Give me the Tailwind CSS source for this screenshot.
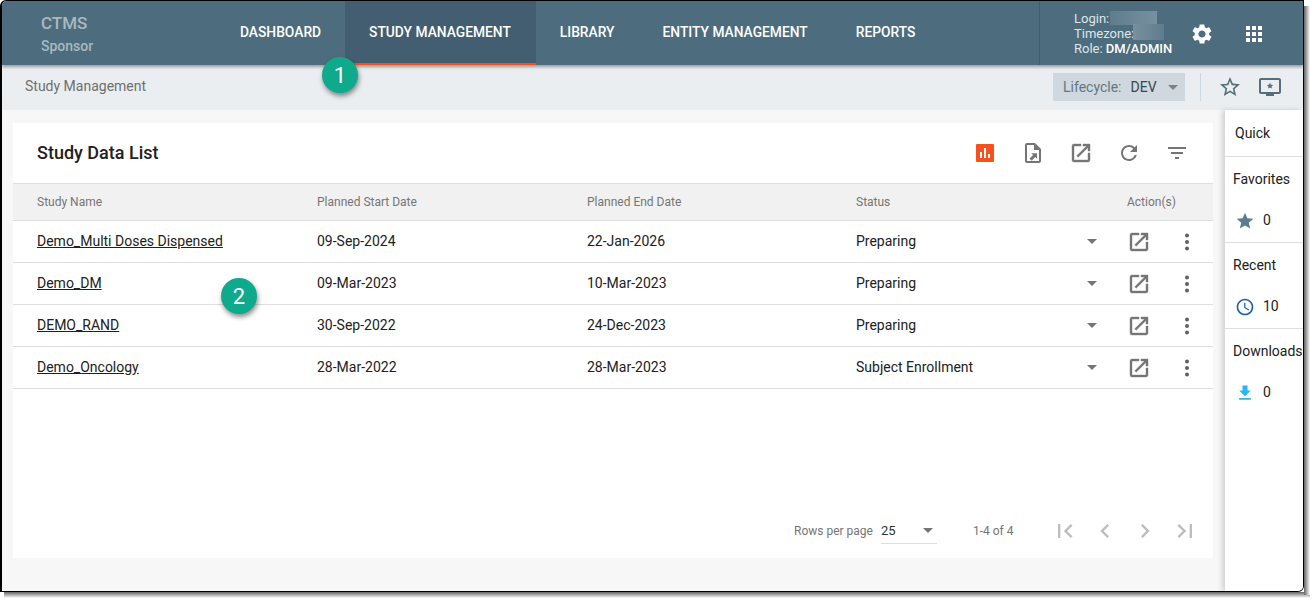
<!DOCTYPE html>
<html lang="en">
<head>
  <title>CTMS Study Management</title>
  <meta charset="utf-8" />
  <script src="https://cdn.jsdelivr.net/npm/@tailwindcss/browser@4"></script>
</head>
<body class="bg-white h-[604px] w-[1315px] overflow-hidden font-['Roboto',sans-serif]">
<div class="relative z-10 w-[1304px] h-[592px] border-t border-l-2 border-r border-b border-black rounded-tl-md rounded-br-md overflow-hidden bg-[#f7f7f7] flex flex-col">

  <!-- top nav -->
  <nav class="h-[64px] shrink-0 bg-[#4d6d7e] flex text-white shadow-[0_2px_3px_rgba(0,0,0,0.35)] z-10">
    <div class="w-[214px] pl-[39px] pt-[11px]">
      <div class="text-[17px] leading-[22px] font-medium text-[#a9b9c2]">CTMS</div>
      <div class="text-[14px] leading-[20px] mt-[2px] font-medium text-[#a9b9c2]">Sponsor</div>
    </div>
    <div class="flex text-[13.8px] font-medium h-full">
      <a class="px-[24px] pb-[1px] flex items-center">DASHBOARD</a>
      <a class="pl-[24px] pr-[25px] flex items-center bg-[#435e70] border-b-2 border-[#f4511e]">STUDY MANAGEMENT</a>
      <a class="px-[24px] pb-[1px] flex items-center">LIBRARY</a>
      <a class="px-[24px] pb-[1px] flex items-center">ENTITY MANAGEMENT</a>
      <a class="px-[24px] pb-[1px] flex items-center">REPORTS</a>
    </div>
    <div class="ml-auto w-[264px] border-l border-[#435e70] flex">
      <div class="relative pl-[34px] pt-[10px] text-[13px] leading-[15px] text-[#dfe6ea] w-[150px]">
        <div>Login:</div>
        <div>Timezone:</div>
        <div>Role: <span class="font-medium text-white">DM/ADMIN</span></div>
        <div class="absolute left-[70px] top-[10px] w-[47px] h-[14px] bg-gradient-to-r from-[#5f7d8d] to-[#7890a0]"></div>
        <div class="absolute left-[93px] top-[23px] w-[31px] h-[16px] bg-gradient-to-r from-[#7890a0] to-[#5f7d8d]"></div>
      </div>
      <svg class="mt-[21px] w-[24px] h-[24px] fill-white" viewBox="0 0 24 24"><path d="M19.14 12.94c.04-.3.06-.61.06-.94 0-.32-.02-.64-.07-.94l2.03-1.58a.49.49 0 0 0 .12-.61l-1.92-3.32a.488.488 0 0 0-.59-.22l-2.39.96c-.5-.38-1.03-.7-1.62-.94l-.36-2.54a.484.484 0 0 0-.48-.41h-3.84c-.24 0-.43.17-.47.41l-.36 2.54c-.59.24-1.13.57-1.62.94l-2.39-.96c-.22-.08-.47 0-.59.22L2.74 8.87c-.12.21-.08.47.12.61l2.03 1.58c-.05.3-.09.63-.09.94s.02.64.07.94l-2.03 1.58a.49.49 0 0 0-.12.61l1.92 3.32c.12.22.37.29.59.22l2.39-.96c.5.38 1.03.7 1.62.94l.36 2.54c.05.24.24.41.48.41h3.84c.24 0 .44-.17.47-.41l.36-2.54c.59-.24 1.13-.56 1.62-.94l2.39.96c.22.08.47 0 .59-.22l1.92-3.32c.12-.22.07-.47-.12-.61l-2.01-1.58zM12 15.6c-1.98 0-3.6-1.62-3.6-3.6s1.62-3.6 3.6-3.6 3.6 1.62 3.6 3.6-1.62 3.6-3.6 3.6z"/></svg>
      <svg class="ml-[28px] mt-[21px] w-[24px] h-[24px] fill-white" viewBox="0 0 24 24"><path d="M4 8h4V4H4v4zm6 12h4v-4h-4v4zm-6 0h4v-4H4v4zm0-6h4v-4H4v4zm6 0h4v-4h-4v4zm6-10v4h4V4h-4zm-6 4h4V4h-4v4zm6 6h4v-4h-4v4zm0 6h4v-4h-4v4z"/></svg>
    </div>
  </nav>

  <!-- breadcrumb bar -->
  <div class="h-[45px] shrink-0 bg-[#eaeef1] flex items-center pl-[23px] text-[14px] text-[#6f6f6f]">
    <span class="mb-[3px]">Study Management</span>
    <div class="ml-auto flex items-center mb-[1px]">
      <div class="w-[132px] h-[28px] bg-[#cfd8de] flex items-center pl-[10px] text-[14px]">
        <span class="text-[#66757f]">Lifecycle:</span>
        <span class="ml-[9px] text-[#37474f]">DEV</span>
        <span class="ml-[11px] mt-[1px] w-0 h-0 border-x-[5px] border-x-transparent border-t-[5px] border-t-[#808080]"></span>
      </div>
      <div class="w-px h-[28px] bg-[#cfd8de] ml-[15px]"></div>
      <svg class="ml-[17px] w-[24px] h-[24px] fill-[#546e7a]" viewBox="0 0 24 24"><path d="M22 9.24l-7.19-.62L12 2 9.19 8.63 2 9.24l5.46 4.73L5.82 21 12 17.27 18.18 21l-1.63-7.03L22 9.24zM12 15.4l-3.76 2.27 1-4.28-3.32-2.88 4.38-.38L12 6.1l1.71 4.04 4.38.38-3.32 2.88 1 4.28L12 15.4z"/></svg>
      <svg class="ml-[16px] mr-[21px] w-[24px] h-[24px] fill-[#546e7a]" viewBox="0 0 24 24"><path d="M21 3H3c-1.1 0-2 .9-2 2v12c0 1.1.9 2 2 2h5v2h8v-2h5c1.1 0 2-.9 2-2V5c0-1.1-.9-2-2-2zm0 14H3V5h18v12z"/><path d="M12 7.6l.9 2.1 2.3.2-1.7 1.5.5 2.2-2-1.2-2 1.2.5-2.2-1.7-1.5 2.3-.2z"/></svg>
    </div>
  </div>

  <div class="flex-1 flex min-h-0">
    <!-- main card -->
    <div class="flex-1 pl-[11px] pr-[12px] pt-[13px] pb-[33px]">
      <div class="bg-white h-full flex flex-col">
        <div class="h-[60px] shrink-0 flex items-center pl-[24px]">
          <h1 class="text-[18px] font-medium text-[#212121] mb-[1px]">Study Data List</h1>
          <div class="ml-auto flex items-center gap-[24px] pr-[24px]">
            <span class="w-[24px] h-[24px] flex items-center justify-center">
              <svg class="w-[18px] h-[18px]" viewBox="0 0 18 18"><rect width="18" height="18" rx="1" fill="#f4511e"/><path fill="#fff" d="M4 8h2v6H4zM8 4h2v10H8zM12 10h2v4h-2z"/></svg>
            </span>
            <svg class="w-[24px] h-[24px]" viewBox="0 0 24 24" fill="#757575"><path d="M14 2H6c-1.1 0-2 .9-2 2v16c0 1.1.9 2 2 2h12c1.1 0 2-.9 2-2V8l-6-6zm4 18H6V4h7v5h5v11z"/><path d="M8.5 17.5l3.6-3.6-1.7-1.7h5.6v5.6l-1.7-1.7-3.6 3.6z"/></svg>
            <svg class="w-[24px] h-[24px]" viewBox="0 0 24 24" fill="#757575" stroke="#757575" stroke-width=".4"><path d="M19 19H5V5h7V3H5a2 2 0 0 0-2 2v14a2 2 0 0 0 2 2h14c1.1 0 2-.9 2-2v-7h-2v7zM14 3v2h3.59l-9.83 9.83 1.41 1.41L19 6.41V10h2V3h-7z"/></svg>
            <svg class="w-[24px] h-[24px]" viewBox="0 0 24 24" fill="#757575"><path d="M17.65 6.35A7.958 7.958 0 0 0 12 4c-4.42 0-7.99 3.58-7.99 8s3.57 8 7.99 8c3.73 0 6.84-2.55 7.73-6h-2.08A5.99 5.99 0 0 1 12 18c-3.31 0-6-2.69-6-6s2.69-6 6-6c1.66 0 3.14.69 4.22 1.78L13 11h7V4l-2.35 2.35z"/></svg>
            <svg class="w-[24px] h-[24px]" viewBox="0 0 24 24" fill="#757575"><path d="M10 18h4v-2h-4v2zM3 6v2h18V6H3zm3 7h12v-2H6v2z"/></svg>
          </div>
        </div>

        <div class="h-[38px] shrink-0 bg-[#f1f1f1] border-y border-[#dedede] grid grid-cols-[280px_270px_269px_271px_1fr] pl-[24px] items-center text-[12px] text-[#757575]">
          <span>Study Name</span>
          <span>Planned Start Date</span>
          <span>Planned End Date</span>
          <span>Status</span>
          <span>Action(s)</span>
        </div>

        <div class="h-[42px] shrink-0 border-b border-[#dedede] grid grid-cols-[280px_270px_269px_271px_1fr] pl-[24px] items-center text-[14px] text-[#212121]">
          <a class="underline">Demo_Multi Doses Dispensed</a>
          <span>09-Sep-2024</span>
          <span>22-Jan-2026</span>
          <span class="relative">Preparing<i class="absolute right-[30px] top-[8px] w-0 h-0 border-x-[5px] border-x-transparent border-t-[5px] border-t-[#757575]"></i></span>
          <span class="flex items-center">
            <svg class="w-[24px] h-[24px]" viewBox="0 0 24 24" fill="#757575" stroke="#757575" stroke-width=".4"><path d="M19 19H5V5h7V3H5a2 2 0 0 0-2 2v14a2 2 0 0 0 2 2h14c1.1 0 2-.9 2-2v-7h-2v7zM14 3v2h3.59l-9.83 9.83 1.41 1.41L19 6.41V10h2V3h-7z"/></svg>
            <svg class="ml-[24px] w-[24px] h-[24px]" viewBox="0 0 24 24" fill="#616161"><circle cx="12" cy="5.5" r="2"/><circle cx="12" cy="12" r="2"/><circle cx="12" cy="18.5" r="2"/></svg>
          </span>
        </div>
        <div class="h-[42px] shrink-0 border-b border-[#dedede] grid grid-cols-[280px_270px_269px_271px_1fr] pl-[24px] items-center text-[14px] text-[#212121]">
          <a class="underline">Demo_DM</a>
          <span>09-Mar-2023</span>
          <span>10-Mar-2023</span>
          <span class="relative">Preparing<i class="absolute right-[30px] top-[8px] w-0 h-0 border-x-[5px] border-x-transparent border-t-[5px] border-t-[#757575]"></i></span>
          <span class="flex items-center">
            <svg class="w-[24px] h-[24px]" viewBox="0 0 24 24" fill="#757575" stroke="#757575" stroke-width=".4"><path d="M19 19H5V5h7V3H5a2 2 0 0 0-2 2v14a2 2 0 0 0 2 2h14c1.1 0 2-.9 2-2v-7h-2v7zM14 3v2h3.59l-9.83 9.83 1.41 1.41L19 6.41V10h2V3h-7z"/></svg>
            <svg class="ml-[24px] w-[24px] h-[24px]" viewBox="0 0 24 24" fill="#616161"><circle cx="12" cy="5.5" r="2"/><circle cx="12" cy="12" r="2"/><circle cx="12" cy="18.5" r="2"/></svg>
          </span>
        </div>
        <div class="h-[42px] shrink-0 border-b border-[#dedede] grid grid-cols-[280px_270px_269px_271px_1fr] pl-[24px] items-center text-[14px] text-[#212121]">
          <a class="underline">DEMO_RAND</a>
          <span>30-Sep-2022</span>
          <span>24-Dec-2023</span>
          <span class="relative">Preparing<i class="absolute right-[30px] top-[8px] w-0 h-0 border-x-[5px] border-x-transparent border-t-[5px] border-t-[#757575]"></i></span>
          <span class="flex items-center">
            <svg class="w-[24px] h-[24px]" viewBox="0 0 24 24" fill="#757575" stroke="#757575" stroke-width=".4"><path d="M19 19H5V5h7V3H5a2 2 0 0 0-2 2v14a2 2 0 0 0 2 2h14c1.1 0 2-.9 2-2v-7h-2v7zM14 3v2h3.59l-9.83 9.83 1.41 1.41L19 6.41V10h2V3h-7z"/></svg>
            <svg class="ml-[24px] w-[24px] h-[24px]" viewBox="0 0 24 24" fill="#616161"><circle cx="12" cy="5.5" r="2"/><circle cx="12" cy="12" r="2"/><circle cx="12" cy="18.5" r="2"/></svg>
          </span>
        </div>
        <div class="h-[42px] shrink-0 border-b border-[#dedede] grid grid-cols-[280px_270px_269px_271px_1fr] pl-[24px] items-center text-[14px] text-[#212121]">
          <a class="underline">Demo_Oncology</a>
          <span>28-Mar-2022</span>
          <span>28-Mar-2023</span>
          <span class="relative">Subject Enrollment<i class="absolute right-[30px] top-[8px] w-0 h-0 border-x-[5px] border-x-transparent border-t-[5px] border-t-[#757575]"></i></span>
          <span class="flex items-center">
            <svg class="w-[24px] h-[24px]" viewBox="0 0 24 24" fill="#757575" stroke="#757575" stroke-width=".4"><path d="M19 19H5V5h7V3H5a2 2 0 0 0-2 2v14a2 2 0 0 0 2 2h14c1.1 0 2-.9 2-2v-7h-2v7zM14 3v2h3.59l-9.83 9.83 1.41 1.41L19 6.41V10h2V3h-7z"/></svg>
            <svg class="ml-[24px] w-[24px] h-[24px]" viewBox="0 0 24 24" fill="#616161"><circle cx="12" cy="5.5" r="2"/><circle cx="12" cy="12" r="2"/><circle cx="12" cy="18.5" r="2"/></svg>
          </span>
        </div>

        <!-- pagination -->
        <div class="mt-auto h-[56px] shrink-0 flex items-center pl-[781px] text-[12px] text-[#757575] pt-[2px]">
          <span>Rows per page</span>
          <div class="ml-[8px] w-[56px] h-[26px] border-b border-[#dedede] flex items-center justify-between pr-[4px] text-[13px] text-[#333333]">
            <span>25</span>
            <i class="w-0 h-0 border-x-[5px] border-x-transparent border-t-[5px] border-t-[#757575]"></i>
          </div>
          <span class="ml-[36px]">1-4 of 4</span>
          <div class="ml-[38px] flex gap-[12px]">
            <svg class="w-[28px] h-[28px]" viewBox="0 0 24 24" fill="#bdbdbd"><path d="M18.41 16.59L13.82 12l4.59-4.59L17 6l-6 6 6 6zM6 6h2v12H6z"/></svg>
            <svg class="w-[28px] h-[28px]" viewBox="0 0 24 24" fill="#bdbdbd"><path d="M15.41 7.41L14 6l-6 6 6 6 1.41-1.41L10.83 12z"/></svg>
            <svg class="w-[28px] h-[28px]" viewBox="0 0 24 24" fill="#bdbdbd"><path d="M10 6L8.59 7.41 13.17 12l-4.58 4.59L10 18l6-6z"/></svg>
            <svg class="w-[28px] h-[28px]" viewBox="0 0 24 24" fill="#bdbdbd"><path d="M5.59 7.41L10.18 12l-4.59 4.59L7 18l6-6-6-6zM16 6h2v12h-2z"/></svg>
          </div>
        </div>
      </div>
    </div>

    <!-- quick panel -->
    <aside class="w-[78px] shrink-0 bg-white shadow-[-3px_0_5px_rgba(0,0,0,0.15)] text-[14px] text-[#212121] overflow-hidden whitespace-nowrap">
      <div class="h-[47px] border-b border-[#dedede] pl-[10px] pt-[13px] leading-[20px]">Quick</div>
      <div class="h-[86px] border-b border-[#dedede] pl-[8px] pt-[12px] leading-[20px]">
        <div>Favorites</div>
        <div class="flex items-center mt-[19px] pl-[2px]">
          <svg class="w-[20px] h-[20px] mt-[3px]" viewBox="0 0 24 24" fill="#5a7d92"><path d="M12 17.27L18.18 21l-1.64-7.03L22 9.24l-7.19-.61L12 2 9.19 8.63 2 9.24l5.46 4.73L5.82 21z"/></svg>
          <span class="ml-[8px]">0</span>
        </div>
      </div>
      <div class="h-[86px] border-b border-[#dedede] pl-[8px] pt-[12px] leading-[20px]">
        <div>Recent</div>
        <div class="flex items-center mt-[19px] pl-[2px]">
          <svg class="w-[20px] h-[20px] mt-[3px]" viewBox="0 0 24 24" fill="#1e5fa8"><path d="M11.99 2C6.47 2 2 6.48 2 12s4.47 10 9.99 10C17.52 22 22 17.52 22 12S17.52 2 11.99 2zM12 20c-4.42 0-8-3.58-8-8s3.58-8 8-8 8 3.58 8 8-3.58 8-8 8zm.5-13H11v6l5.25 3.15.75-1.23-4.5-2.67z"/></svg>
          <span class="ml-[8px]">10</span>
        </div>
      </div>
      <div class="pl-[8px] pt-[12px] leading-[20px]">
        <div>Downloads</div>
        <div class="flex items-center mt-[19px] pl-[2px]">
          <svg class="w-[20px] h-[20px] mt-[3px]" viewBox="0 0 24 24" fill="#29b6f6"><path d="M19 9h-4V3H9v6H5l7 7 7-7zM5 18v2h14v-2H5z"/></svg>
          <span class="ml-[8px]">0</span>
        </div>
      </div>
    </aside>
  </div>

  <!-- callout badges -->
  <div class="absolute left-[320px] top-[56px] w-[36px] h-[36px] rounded-full bg-[#0fa98b] text-white text-[22px] flex items-center justify-center shadow-[1px_3px_5px_rgba(0,0,0,0.45)] z-20">1</div>
  <div class="absolute left-[219px] top-[277px] w-[36px] h-[36px] rounded-full bg-[#0fa98b] text-white text-[22px] flex items-center justify-center shadow-[1px_3px_5px_rgba(0,0,0,0.45)] z-20">2</div>
</div>
<!-- drop shadow of the screenshot frame -->
<div class="absolute left-[4px] top-[592px] w-[1306px] h-[6px] bg-gradient-to-b from-[#666666] to-white"></div>
<div class="absolute left-[1304px] top-[6px] w-[6px] h-[589px] bg-gradient-to-r from-[#666666] to-white"></div>
</body>
</html>
